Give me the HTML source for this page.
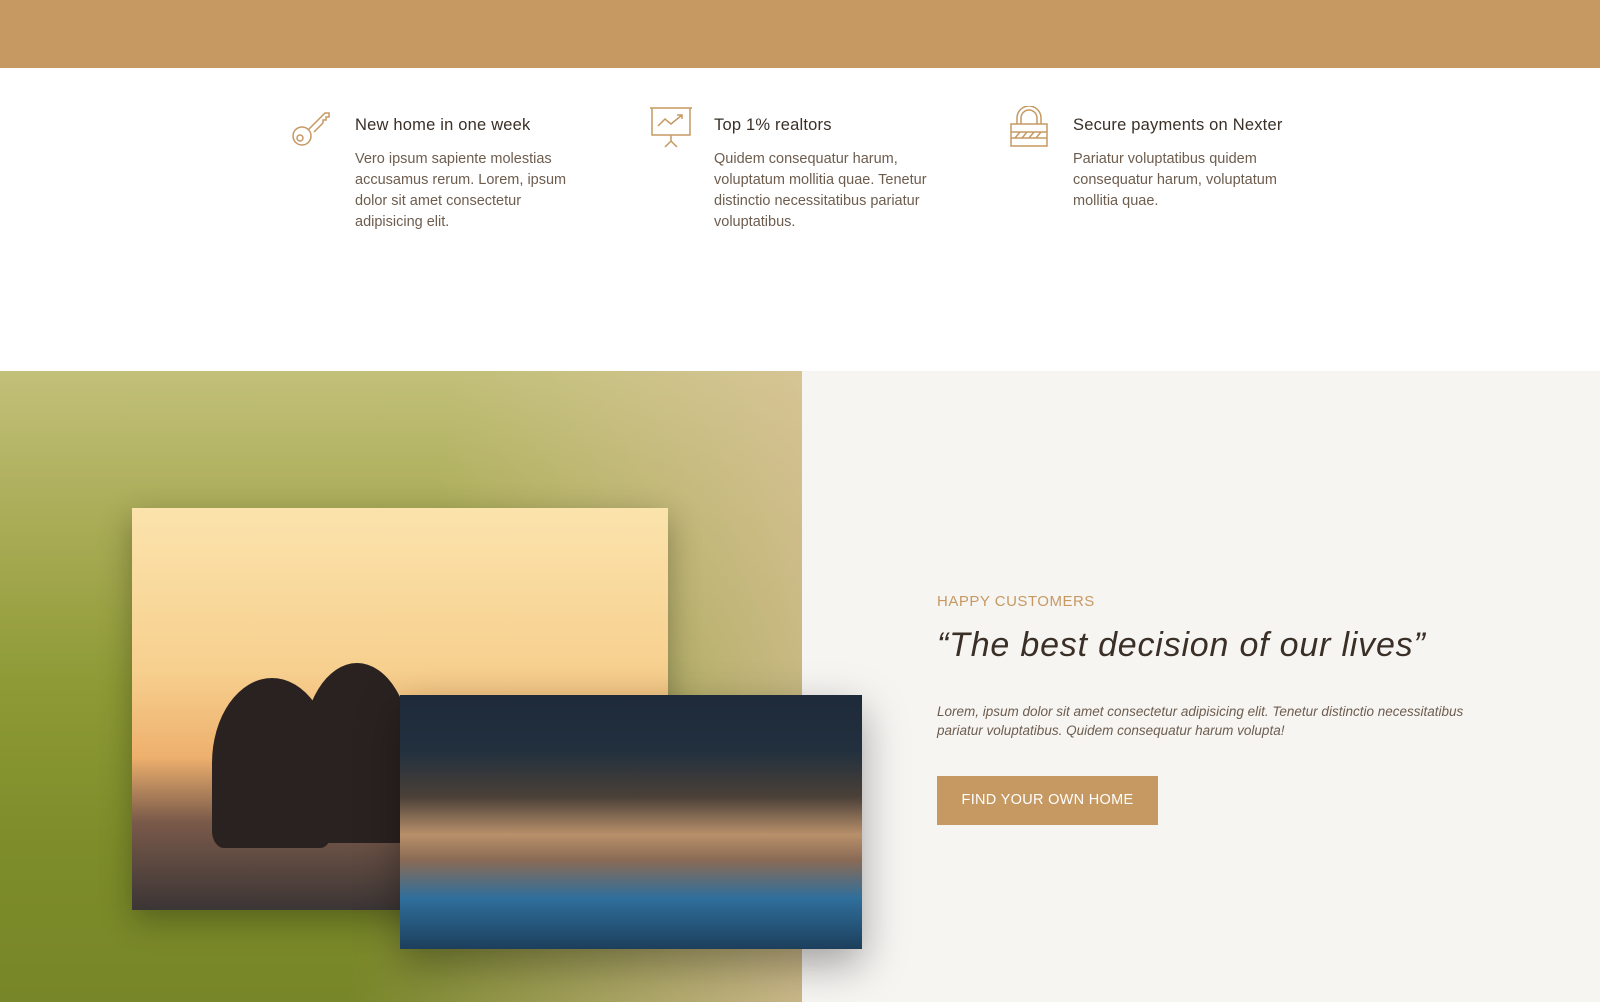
<!DOCTYPE html>
<html><head><meta charset="utf-8"><style>
*{margin:0;padding:0;box-sizing:border-box}
body{width:1600px;height:1002px;overflow:hidden;background:#fff;font-family:"Liberation Sans",sans-serif;position:relative}
.top{position:absolute;left:0;top:0;width:1600px;height:68px;background:#c69963}
.feat{position:absolute;top:106px;width:235px}
.feat svg{position:absolute;left:-66px;top:0}
.feat h3{font-weight:normal;font-size:16.5px;color:#3a3028;margin-top:10px;letter-spacing:.2px;white-space:nowrap}
.feat p{font-size:14.5px;line-height:21px;color:#6d5d4f;margin-top:14px}
.left{position:absolute;left:0;top:371px;width:802px;height:631px;background:linear-gradient(180deg,#c2c07a 0%,#a9ab55 25%,#8d9a35 50%,#7e8d2a 75%,#778628 100%)}
.left:before{content:"";position:absolute;inset:0;background:linear-gradient(100deg,rgba(0,0,0,0) 50%,rgba(230,200,170,.75) 100%);}
.right{position:absolute;left:802px;top:371px;width:798px;height:631px;background:#f7f5f2}
.img1{position:absolute;left:132px;top:508px;width:536px;height:402px;background:linear-gradient(180deg,#fbe3ac 0%,#f7d08f 40%,#eeb06d 62%,#7a5a4a 78%,#3b3535 100%);box-shadow:0 10px 30px rgba(0,0,0,.3);overflow:hidden}
.sil{position:absolute;background:#2a2220;border-radius:50% 50% 10% 10%}
.img2{position:absolute;left:400px;top:695px;width:462px;height:254px;background:linear-gradient(180deg,#1e2a3a 0%,#22303e 22%,#4a4038 40%,#b8906a 55%,#8a6a55 65%,#2f6f9c 80%,#1d3f5c 100%);box-shadow:0 15px 40px rgba(0,0,0,.35)}
.lab{position:absolute;left:937px;top:593px;font-size:15px;color:#c69963;letter-spacing:.5px}
h2{position:absolute;left:937px;top:626px;font-weight:normal;font-style:italic;font-size:34px;color:#3a3028;letter-spacing:.8px}
.txt{position:absolute;left:937px;top:702px;font-size:13.5px;line-height:19px;font-style:italic;color:#6d5d4f;width:540px}
.btn{position:absolute;left:937px;top:776px;width:221px;height:49px;background:#c69963;color:#fff;font-size:14.5px;text-align:center;line-height:49px;letter-spacing:.3px}
</style></head><body>
<div class="top"></div>
<div class="feat" style="left:355px">
<svg width="44" height="44" viewBox="0 0 44 44" fill="none" stroke="#c69963" stroke-width="1.5"><circle cx="13" cy="30" r="9"/><circle cx="11" cy="32" r="3"/><path d="M19 24 L36 7 L40 7 L40 11 L37 11 L37 14 L34 14 L34 17 L25 26"/></svg>
<h3>New home in one week</h3><p>Vero ipsum sapiente molestias accusamus rerum. Lorem, ipsum dolor sit amet consectetur adipisicing elit.</p></div>
<div class="feat" style="left:714px">
<svg width="44" height="44" viewBox="0 0 44 44" fill="none" stroke="#c69963" stroke-width="1.5"><path d="M2 2H44M4 2V29H42V2M23 29V35M17 41L23 35L29 41M10 20L17 13L23 18L34 9M29 9H34V13"/></svg>
<h3>Top 1% realtors</h3><p>Quidem consequatur harum, voluptatum mollitia quae. Tenetur distinctio necessitatibus pariatur voluptatibus.</p></div>
<div class="feat" style="left:1073px">
<svg width="44" height="44" viewBox="0 0 44 44" fill="none" stroke="#c69963" stroke-width="1.5"><path d="M10 18V12A12 12 0 0 1 34 12V18M14 18V12A8 8 0 0 1 30 12V18"/><rect x="4" y="18" width="36" height="22"/><path d="M4 26H40M4 32H40M8 32L13 26M15 32L20 26M22 32L27 26M29 32L34 26"/></svg>
<h3>Secure payments on Nexter</h3><p>Pariatur voluptatibus quidem consequatur harum, voluptatum mollitia quae.</p></div>
<div class="left"></div><div class="right"></div>
<div class="img1"><div class="sil" style="left:80px;top:170px;width:120px;height:170px"></div><div class="sil" style="left:170px;top:155px;width:110px;height:180px"></div></div>
<div class="img2"></div>
<div class="lab">HAPPY CUSTOMERS</div>
<h2>“The best decision of our lives”</h2>
<div class="txt">Lorem, ipsum dolor sit amet consectetur adipisicing elit. Tenetur distinctio necessitatibus pariatur voluptatibus. Quidem consequatur harum volupta!</div>
<div class="btn">FIND YOUR OWN HOME</div>
</body></html>
